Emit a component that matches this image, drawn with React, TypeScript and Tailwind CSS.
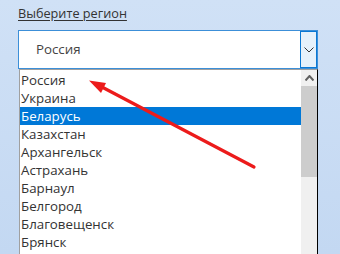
import React from "react";

const items = [
  "Россия",
  "Украина",
  "Беларусь",
  "Казахстан",
  "Архангельск",
  "Астрахань",
  "Барнаул",
  "Белгород",
  "Благовещенск",
  "Брянск",
];

export default function App() {
  return (
    <div
      className="relative w-[340px] h-[254px] overflow-hidden bg-gradient-to-b from-[#d0e1f6] to-[#c3d8f2] text-[#333]"
      style={{ fontFamily: '"Open Sans", "Noto Sans", sans-serif' }}
    >
      <div className="pl-[18px] pt-[4px]">
        <div className="text-[12.7px] leading-[18px] underline underline-offset-[2px] text-[#333]">
          Выберите регион
        </div>
        <div className="mt-[8px] flex h-[39px] w-[300px] border border-[#3c8fd8] bg-white">
          <div className="flex flex-1 items-center pl-[17px] text-[13.3px] text-[#444]">
            Россия
          </div>
          <div className="flex w-[17px] items-center justify-center border border-[#0a78d4] bg-[#e5f1fb]">
            <svg width="10" height="6" viewBox="0 0 10 6">
              <path d="M0.5 0.5 L5 5 L9.5 0.5" fill="none" stroke="#333" strokeWidth="1" />
            </svg>
          </div>
        </div>
        <div className="ml-[1px] flex h-[200px] w-[299px] border-l border-t border-r border-l-[#a0a0a0] border-t-[#a0a0a0] border-r-black bg-white">
          <div className="flex-1 pt-[1px]">
            {items.map((it) => (
              <div
                key={it}
                className={
                  "h-[18px] pl-[1px] text-[13.3px] leading-[18px] " +
                  (it === "Беларусь" ? "bg-[#0078d7] text-white" : "text-[#333]")
                }
              >
                {it}
              </div>
            ))}
          </div>
          <div className="flex w-[16px] flex-col bg-[#f0f0f0]">
            <div className="flex h-[16px] items-center justify-center">
              <svg width="9" height="6" viewBox="0 0 9 6">
                <path d="M0.5 5.5 L4.5 1 L8.5 5.5" fill="none" stroke="#606060" strokeWidth="2" />
              </svg>
            </div>
            <div className="h-[91px] bg-[#cdcdcd]" />
          </div>
        </div>
      </div>
      <svg className="absolute left-0 top-0" width="340" height="254" viewBox="0 0 340 254">
        <line x1="254" y1="167" x2="100" y2="86" stroke="#ec1b1b" strokeWidth="3.2" strokeLinecap="round" />
        <polygon points="89,80.5 101,93 106,83" fill="#ec1b1b" />
      </svg>
    </div>
  );
}
